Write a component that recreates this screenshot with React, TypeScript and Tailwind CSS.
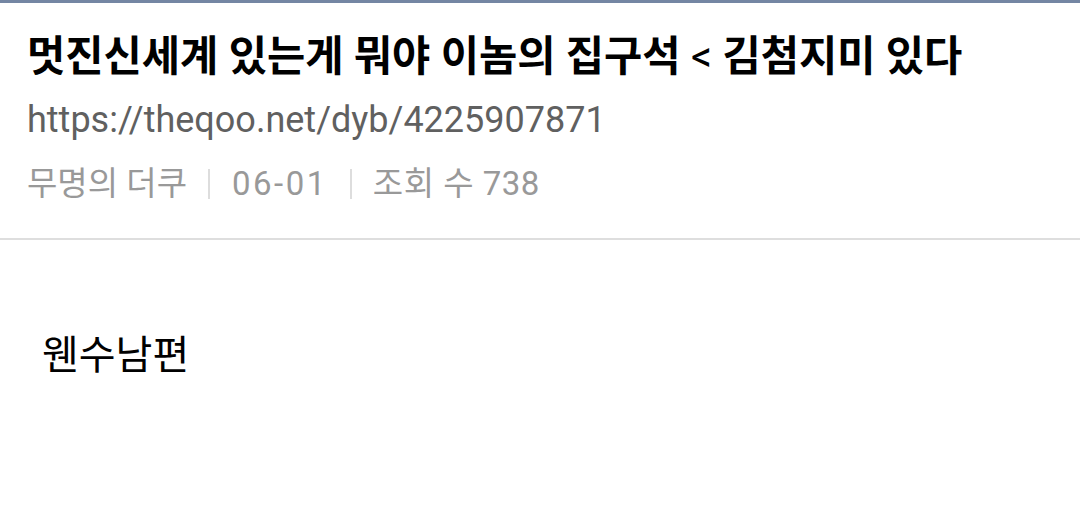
export default function App() {
  return (
    <div
      className="w-[1080px] h-[522px] bg-white overflow-hidden"
      style={{ fontFamily: 'Roboto, "Noto Sans CJK KR", sans-serif' }}
    >
      <div className="h-[3px] bg-[#7486a3]" />
      <div className="px-[27px] pt-[28px]">
        <h1 className="text-[41.6px] font-bold leading-[52px] text-black whitespace-nowrap">
          멋진신세계 있는게 뭐야 이놈의 집구석 <span className="font-normal">&lt;</span> 김첨지미 있다
        </h1>
        <div className="mt-[17px] text-[36px] leading-[40px] text-[#606060]">
          https://theqoo.net/dyb/4225907871
        </div>
        <div className="mt-[24px] flex items-center text-[33px] leading-[40px] text-[#999999]">
          <span>무명의 더쿠</span>
          <span className="ml-[21px] mr-[22px] w-[2px] h-[30px] bg-[#dddddd]" />
          <span className="tracking-[2.5px]">06-01</span>
          <span className="ml-[22px] mr-[21px] w-[2px] h-[30px] bg-[#dddddd]" />
          <span className="tracking-[0.5px]">조회 수 738</span>
        </div>
      </div>
      <div className="mt-[34px] h-[2px] bg-[#dedede]" />
      <div className="px-[42px] pt-[92px] text-[40px] leading-[48px] text-black">
        웬수남편
      </div>
    </div>
  )
}
